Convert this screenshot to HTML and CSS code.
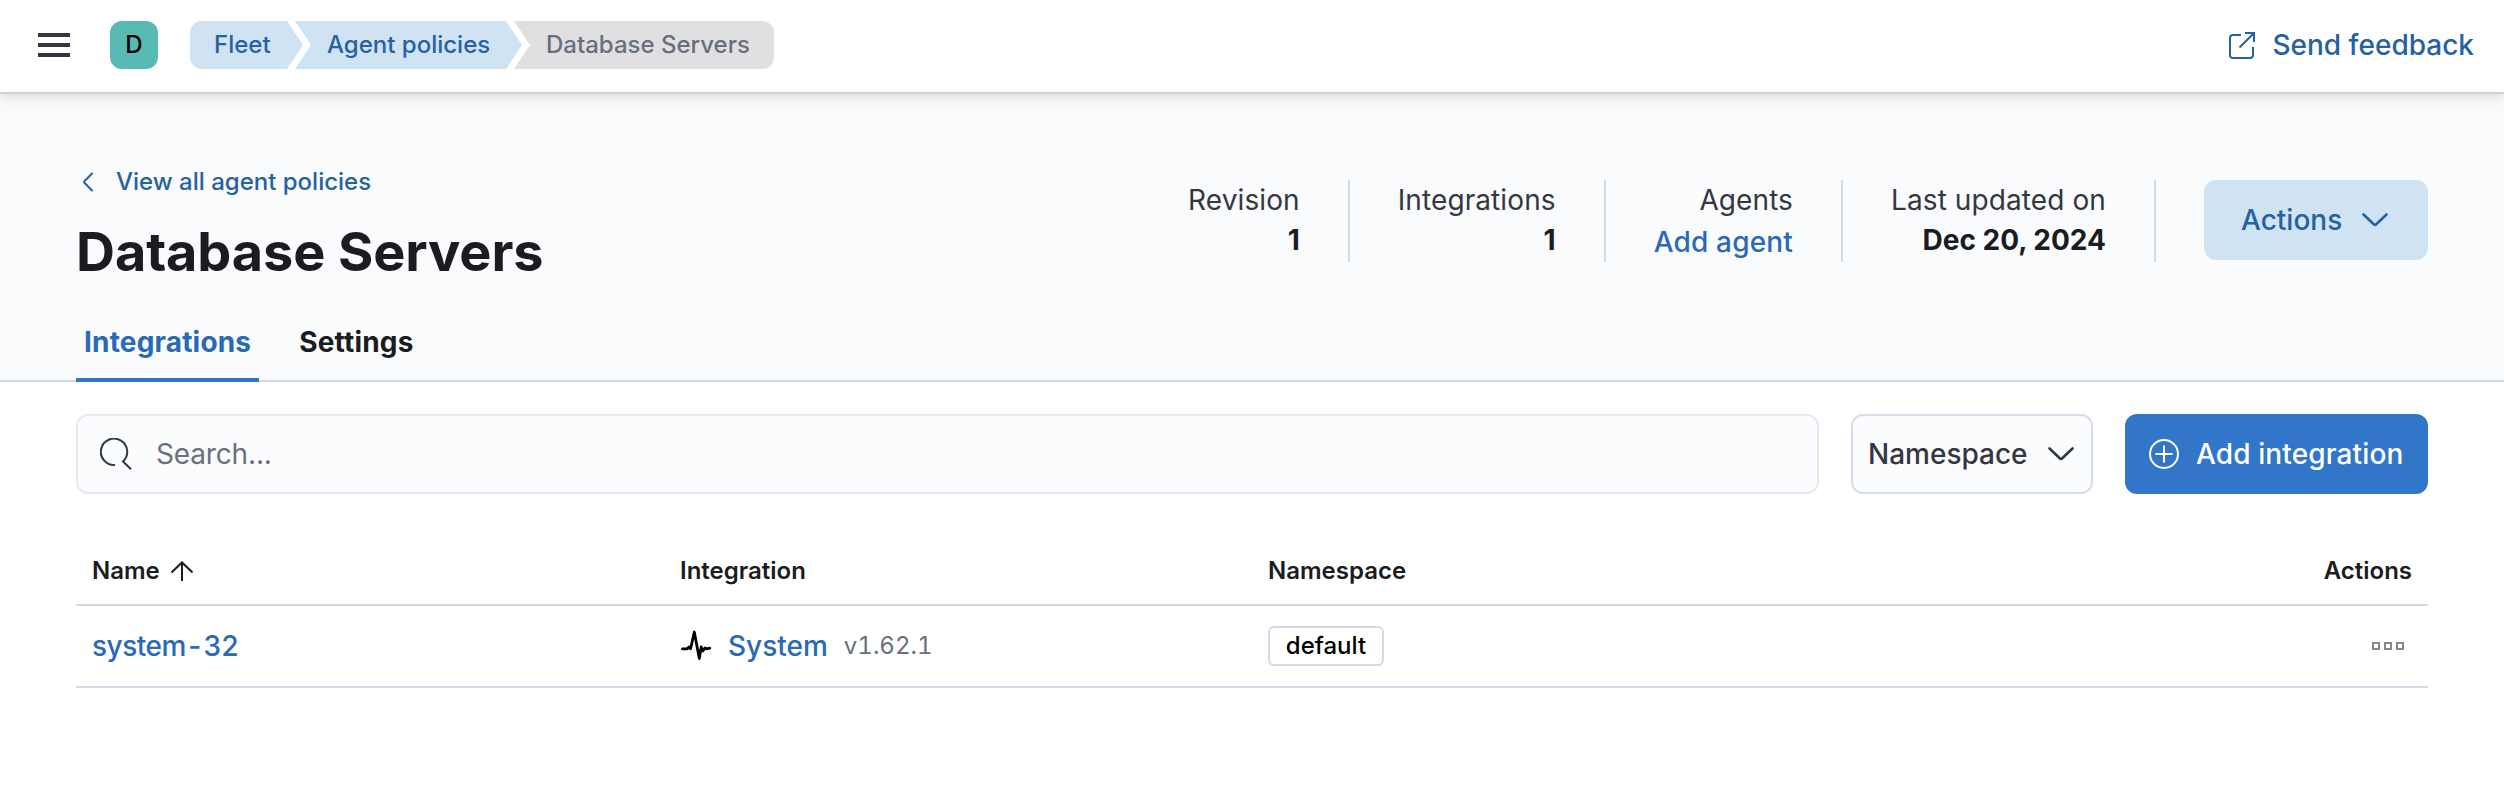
FILE: index.html
```html
<!DOCTYPE html>
<html lang="en">
<head>
<meta charset="utf-8">
<title>Database Servers - Agent policies - Fleet</title>
<link rel="stylesheet" href="styles.css">
</head>
<body>
<header class="topbar">
  <button class="menu" aria-label="Menu"><svg width="32" height="24" viewBox="0 0 32 24" fill="#343741"><path d="M0 0h32v4H0zM0 10h32v4H0zM0 20h32v4H0z"/></svg></button>
  <span class="space">D</span>
  <nav class="crumbs">
    <a class="crumb crumb-first">Fleet</a>
    <a class="crumb crumb-mid">Agent policies</a>
    <span class="crumb crumb-last">Database Servers</span>
  </nav>
  <a class="feedback">
    <svg width="28" height="28" viewBox="0 0 28 28" fill="none" stroke="currentColor" stroke-width="2"><path d="M13 4H5a3 3 0 0 0-3 3v17a3 3 0 0 0 3 3h17a3 3 0 0 0 3-3v-8M11.500 16.500 26 2M17 2h9v9"/></svg>
    <span>Send feedback</span>
  </a>
</header>

<section class="hero">
  <div class="hero-row">
    <div class="heading">
      <a class="back"><svg width="12" height="20" viewBox="0 0 12 20" fill="none" stroke="currentColor" stroke-width="2" stroke-linecap="round" stroke-linejoin="round"><path d="M10 1.500 2.400 9.200a1.200 1.200 0 0 0 0 1.600L10 18.500"/></svg><span>View all agent policies</span></a>
      <h1>Database Servers</h1>
    </div>
    <dl class="stats">
      <div class="stat"><dt>Revision</dt><dd>1</dd></div>
      <div class="stat"><dt>Integrations</dt><dd>1</dd></div>
      <div class="stat"><dt>Agents</dt><dd class="stat-link">Add agent</dd></div>
      <div class="stat"><dt>Last updated on</dt><dd>Dec 20, 2024</dd></div>
    </dl>
    <button class="btn btn-actions"><span>Actions</span><svg width="28" height="16" viewBox="0 0 28 16" fill="none" stroke="currentColor" stroke-width="2.600" stroke-linecap="round" stroke-linejoin="round"><path d="M2.500 2.500 13 12.500a1.400 1.400 0 0 0 2 0l10.500-10"/></svg></button>
  </div>
  <nav class="tabs"><a class="tab tab-on">Integrations</a><a class="tab">Settings</a></nav>
</section>

<main class="content">
  <div class="toolbar">
    <div class="search"><svg width="32" height="32" viewBox="0 0 32 32" fill="none" stroke="#343741" stroke-width="2"><path d="M15 27A13.200 13.200 0 1 1 23 23.500L31 31.200"/></svg><span>Search...</span></div>
    <button class="btn btn-filter"><span>Namespace</span><svg width="28" height="16" viewBox="0 0 28 16" fill="none" stroke="currentColor" stroke-width="2.600" stroke-linecap="round" stroke-linejoin="round"><path d="M2.500 2.500 13 12.500a1.400 1.400 0 0 0 2 0l10.500-10"/></svg></button>
    <button class="btn btn-add"><svg width="30" height="30" viewBox="0 0 30 30" fill="none" stroke="currentColor" stroke-width="2"><circle cx="15" cy="15" r="14"/><path d="M6.500 15h17M15 6.500v17"/></svg><span>Add integration</span></button>
  </div>
  <div class="table">
    <div class="row row-head">
      <div class="cell name-head"><span>Name</span><svg width="24" height="20" viewBox="0 0 24 20" fill="none" stroke="currentColor" stroke-width="2"><path d="M12 20V1M1.500 11.500 12 1.500l10.500 10"/></svg></div>
      <div class="cell">Integration</div>
      <div class="cell">Namespace</div>
      <div class="cell end">Actions</div>
    </div>
    <div class="row row-body">
      <div class="cell"><a class="link link-name">system-32</a></div>
      <div class="cell integration"><svg width="32" height="32" viewBox="0 0 32 32" fill="none" stroke="#000" stroke-width="2.800" stroke-linecap="round" stroke-linejoin="round"><path d="M2.400 18.800h4.800L9 17l1.600 1.800L14.300 2l5 26.500L21.200 17l1.600 4 2.200-3 1.200.8 3.600-.6"/></svg><a class="link">System</a><span class="version">v1.62.1</span></div>
      <div class="cell"><span class="badge">default</span></div>
      <div class="cell end"><svg class="dots" width="32" height="8" viewBox="0 0 32 8" fill="none" stroke="#888" stroke-width="2"><path d="M1 1h6v6H1zM13 1h6v6h-6zM25 1h6v6h-6z"/></svg></div>
    </div>
  </div>
</main>
</body>
</html>
```
FILE: styles.css
```css
* { box-sizing: border-box; }
body { margin: 0; background: #fff; color: #1a1c21; font-family: Inter, "Liberation Sans", sans-serif; font-size: 28px; line-height: 40px; font-optical-sizing: none; }
button { font: inherit; border: 0; background: none; padding: 0; }
svg { display: block; flex: none; }
h1, dl, dd { margin: 0; }

.topbar { position: relative; display: flex; align-items: center; height: 94px; padding: 0 30px 2px 38px; background: #fff; border-bottom: 2px solid #cbd2dc; box-shadow: 0 2px 8px rgba(0,0,0,.08), 0 8px 16px rgba(0,0,0,.05); }
.space { width: 48px; height: 48px; margin-left: 40px; border-radius: 12px; background: #57bab4; color: #000; font-size: 24px; font-weight: 500; line-height: 48px; text-align: center; }
.crumbs { display: flex; margin-left: 32px; font-size: 24px; font-weight: 500; line-height: 48px; }
.crumb { height: 48px; color: #2561a3; background: #d0e3f2; white-space: nowrap; }
.crumb-first { width: 113px; padding-left: 24px; border-radius: 12px 0 0 12px; clip-path: polygon(0 0, calc(100% - 16px) 0, 100% 50%, calc(100% - 16px) 100%, 0 100%); }
.crumb-mid { width: 227px; margin-left: -8px; padding-left: 32px; clip-path: polygon(0 0, calc(100% - 16px) 0, 100% 50%, calc(100% - 16px) 100%, 0 100%, 16px 50%); }
.crumb-last { width: 260px; margin-left: -8px; padding-left: 32px; color: #696f7d; background: #e0e0e2; border-radius: 0 12px 12px 0; clip-path: polygon(0 0, 100% 0, 100% 100%, 0 100%, 16px 50%); }
.feedback { display: flex; align-items: center; gap: 16px; margin-left: auto; color: #2561a3; font-weight: 500; }

.hero { height: 288px; background: #fafbfd; border-bottom: 2px solid #d3dae6; padding: 70px 76px 0; }
.hero-row { display: flex; align-items: flex-start; }
.heading { margin-right: auto; }
.back { display: flex; align-items: center; height: 36px; gap: 22px; padding-left: 6px; color: #2561a3; font-size: 24px; font-weight: 500; }
h1 { margin-top: 18px; font-size: 54px; font-weight: 730; line-height: 68px; letter-spacing: -.1px; }
.stats { display: flex; padding-top: 16px; }
.stat { height: 82px; padding-right: 48px; margin-right: 48px; border-right: 2px solid #d3dae6; text-align: right; white-space: nowrap; }
dt { color: #343741; letter-spacing: .1px; }
dd { font-weight: 700; }
.stat-link { padding-top: 2px; color: #2a69b6; font-weight: 500; letter-spacing: .17px; }
.btn { display: flex; align-items: center; height: 80px; border-radius: 12px; font-weight: 500; white-space: nowrap; }
.btn-actions { width: 224px; margin-top: 16px; padding-left: 37px; gap: 19px; color: #2561a3; background: #d0e3f2; }
.tabs { display: flex; gap: 32px; margin-top: 16px; }
.tab { height: 80px; padding: 20px 8px 0; font-weight: 700; letter-spacing: .18px; }
.tab-on { color: #2a69b6; border-bottom: 4px solid #3176ca; }

.content { padding: 32px 76px 0; }
.toolbar { display: flex; gap: 32px; }
.search { flex: 1; display: flex; align-items: center; gap: 24px; height: 80px; padding-left: 22px; border: 2px solid #e6e9f1; border-radius: 12px; background: #fbfcfd; color: #6b707c; letter-spacing: -.15px; }
.btn-filter { width: 242px; padding-left: 15px; gap: 19px; color: #343741; background: #fbfcfd; border: 2px solid #d8dde9; }
.btn-add { width: 303px; padding-left: 24px; gap: 17px; color: #fff; background: #3276c9; letter-spacing: .12px; }

.table { margin-top: 44px; font-variant-numeric: tabular-nums; }
.row { display: grid; grid-template-columns: repeat(4, 1fr); align-items: center; border-bottom: 2px solid #d3dae6; }
.cell { padding: 0 16px; }
.row-head { height: 68px; font-size: 24px; font-weight: 600; }
.row-body { height: 82px; }
.name-head { display: flex; align-items: center; gap: 10px; }
.link { color: #2a69b6; font-weight: 500; }
.link-name { letter-spacing: -.5px; }
.integration { display: flex; align-items: center; gap: 16px; }
.version { color: #69707d; font-size: 24px; }
.end { display: flex; justify-content: flex-end; }
.dots { margin-right: 8px; }
.badge { display: block; width: 116px; height: 40px; border: 2px solid #d3dae6; border-radius: 6px; color: #000; font-size: 24px; font-weight: 500; line-height: 35px; text-align: center; }
```
